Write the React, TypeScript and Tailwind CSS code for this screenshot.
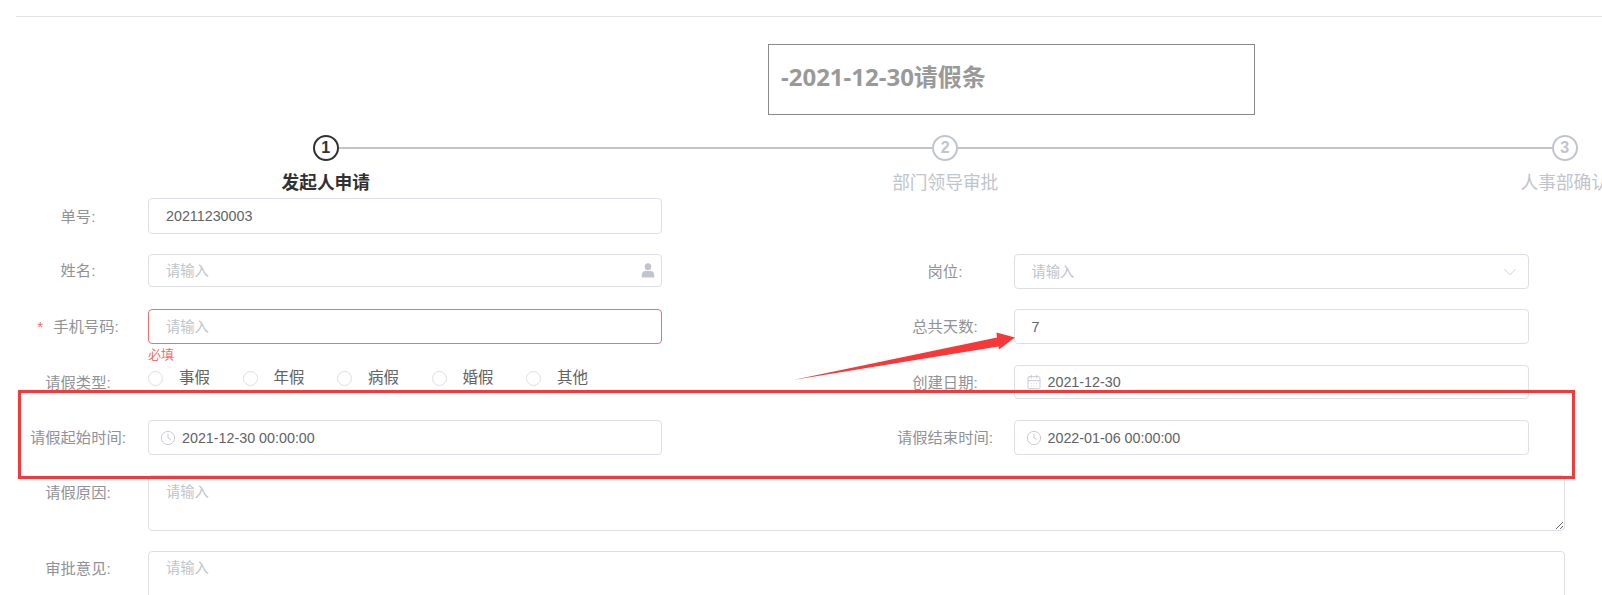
import { Clock, CalendarDays, ChevronDown } from 'lucide-react';
import type { ReactNode } from 'react';

const inputBox = 'flex items-center w-full h-full border border-[#dcdfe6] rounded-[4px] bg-white';
const inputText = 'flex-1 min-w-0 h-full bg-transparent outline-none text-[14.3px] text-[#606266] placeholder:text-[#c0c4cc]';
const leftLabel = 'w-[132px] pr-[8px]';
const rightLabel = 'w-[131px] pr-[6px]';

const steps = [
  { no: 1, title: '发起人申请', active: true },
  { no: 2, title: '部门领导审批', active: false },
  { no: 3, title: '人事部确认', active: false },
];

const leaveTypes = ['事假', '年假', '病假', '婚假', '其他'];

function UserIcon() {
  return (
    <svg viewBox="0 0 14 15" className="w-[14px] h-[15px] shrink-0 mr-[6px] text-[#c0c4cc]" fill="currentColor">
      <ellipse cx="7" cy="3.8" rx="3.3" ry="3.5" />
      <path d="M.8 14.5v-3c0-2.2 1.8-3.6 3.6-3.6h5.2c1.8 0 3.6 1.4 3.6 3.6v3z" />
    </svg>
  );
}

function Label({ text, required, width = leftLabel }: { text: string; required?: boolean; width?: string }) {
  return (
    <label className={`${width} shrink-0 pt-[2px] text-center text-[15.3px] text-[#8f9298]`}>
      {required && <span className="text-[#f56c6c] mr-[10px]">*</span>}
      {text}:
    </label>
  );
}

function Field({ label, required, width, children }: { label: string; required?: boolean; width?: string; children: ReactNode }) {
  return (
    <div className="flex items-center h-full">
      <Label text={label} required={required} width={width} />
      <div className="relative flex-1 h-full min-w-0">{children}</div>
    </div>
  );
}

function TextInput({ value, placeholder = '请输入', right, error }: { value?: string; placeholder?: string; right?: ReactNode; error?: boolean }) {
  return (
    <div className={`${inputBox} ${error ? 'border-[#f56c6c]' : ''}`}>
      <input readOnly defaultValue={value} placeholder={placeholder} className={`${inputText} pl-[17px]`} />
      {right}
    </div>
  );
}

function DateInput({ value, icon }: { value: string; icon: 'clock' | 'calendar' }) {
  return (
    <div className={inputBox}>
      <span className="w-[33px] shrink-0 flex justify-end pr-[6px] text-[#c0c4cc]">
        {icon === 'clock' ? <Clock size={16} strokeWidth={1.3} /> : <CalendarDays size={16} strokeWidth={1.3} />}
      </span>
      <input readOnly defaultValue={value} className={inputText} />
    </div>
  );
}

function TextArea({ label, heightClass }: { label: string; heightClass: string }) {
  return (
    <div className="flex items-start">
      <label className="w-[132px] shrink-0 pr-[8px] pt-[7px] text-center text-[15.3px] text-[#8f9298]">{label}:</label>
      <textarea readOnly placeholder="请输入" className={`w-[1417px] ${heightClass} block border border-[#dcdfe6] rounded-[4px] pl-[17px] pt-[6px] outline-none text-[14.3px] text-[#606266] placeholder:text-[#c0c4cc]`} />
    </div>
  );
}

export default function App() {
  return (
    <div className="relative w-full h-[595px] overflow-hidden bg-white font-['Liberation_Sans','Noto_Sans_CJK_SC',sans-serif]">
      <div className="ml-[16px] mt-[16px] h-px bg-[#dfe2ea]" />

      <div className="ml-[768px] mt-[27px] w-[487px] h-[71px] border border-[#8a8a8a] flex items-center pl-[12px] pb-[5px]">
        <h2 className="text-[24px] font-bold text-[#999] font-['Noto_Sans','Noto_Sans_CJK_SC',sans-serif]">-2021-12-30请假条</h2>
      </div>

      <div className="flex ml-[16px] mt-[20px] w-[1860px] h-[63px]">
        {steps.map((s, i) => (
          <div key={s.no} className="w-[619.5px] flex flex-col items-center">
            <div className="flex items-center w-full">
              <div className={`flex-1 h-[2px] ${i > 0 ? 'bg-[#c0c4cc]' : ''}`} />
              <div className={`w-[26px] h-[26px] shrink-0 rounded-full border-2 flex items-center justify-center text-[16px] font-bold ${s.active ? 'border-[#303133] text-[#303133]' : 'border-[#c0c4cc] text-[#c0c4cc]'}`}>
                {s.no}
              </div>
              <div className={`flex-1 h-[2px] ${i < 2 ? 'bg-[#c0c4cc]' : ''}`} />
            </div>
            <div className={`mt-[9px] text-[17.7px] leading-[26px] whitespace-nowrap ${s.active ? 'font-bold text-[#303133]' : 'text-[#c0c4cc]'}`}>{s.title}</div>
          </div>
        ))}
      </div>

      <div className="grid grid-cols-[646px_646px] gap-x-[220.5px] ml-[16px]">
        <div className="h-[36px]">
          <Field label="单号"><TextInput value="20211230003" /></Field>
        </div>
        <div />

        <div className="h-[33px] mt-[20px]">
          <Field label="姓名"><TextInput right={<UserIcon />} /></Field>
        </div>
        <div className="h-[35px] mt-[20px]">
          <Field label="岗位" width={rightLabel}><TextInput right={<ChevronDown size={22} strokeWidth={0.8} className="text-[#c0c4cc] mr-[7px]" />} /></Field>
        </div>

        <div className="h-[35px] mt-[20px]">
          <Field label="手机号码" required>
            <TextInput error />
            <div className="absolute left-0 top-[36px] text-[13px] leading-[20px] text-[#f56c6c]">必填</div>
          </Field>
        </div>
        <div className="h-[35px] mt-[20px]">
          <Field label="总共天数" width={rightLabel}><TextInput value="7" /></Field>
        </div>

        <div className="h-[34px] mt-[21px]">
          <div className="flex items-center h-full">
            <Label text="请假类型" />
            <div className="flex flex-1 self-start pt-[5px]">
              {leaveTypes.map(t => (
                <div key={t} className="w-[94.5px] flex items-center">
                  <span className="w-[15px] h-[15px] rounded-full border border-[#dcdfe6] shrink-0" />
                  <span className="ml-[16px] text-[15.5px] leading-[16px] text-[#606266]">{t}</span>
                </div>
              ))}
            </div>
          </div>
        </div>
        <div className="h-[34px] mt-[21px]">
          <Field label="创建日期" width={rightLabel}><DateInput value="2021-12-30" icon="calendar" /></Field>
        </div>

        <div className="h-[35px] mt-[21px]">
          <Field label="请假起始时间"><DateInput value="2021-12-30 00:00:00" icon="clock" /></Field>
        </div>
        <div className="h-[35px] mt-[21px]">
          <Field label="请假结束时间" width={rightLabel}><DateInput value="2022-01-06 00:00:00" icon="clock" /></Field>
        </div>
      </div>

      <div className="ml-[16px] mt-[20px] flex flex-col gap-[20px]">
        <TextArea label="请假原因" heightClass="h-[56px]" />
        <TextArea label="审批意见" heightClass="h-[80px]" />
      </div>

      {/* screenshot annotations drawn on top of the form */}
      <div className="absolute left-[18px] top-[390px] w-[1557px] h-[89px] border-[3px] border-[#f83838] pointer-events-none" />
      <svg className="absolute left-0 top-0 pointer-events-none" width="1602" height="595">
        <polygon points="793,380 997,337.5 996.5,332.5 1015,337.5 999,349.5 998.5,346.5" fill="#f83838" />
      </svg>
    </div>
  );
}
